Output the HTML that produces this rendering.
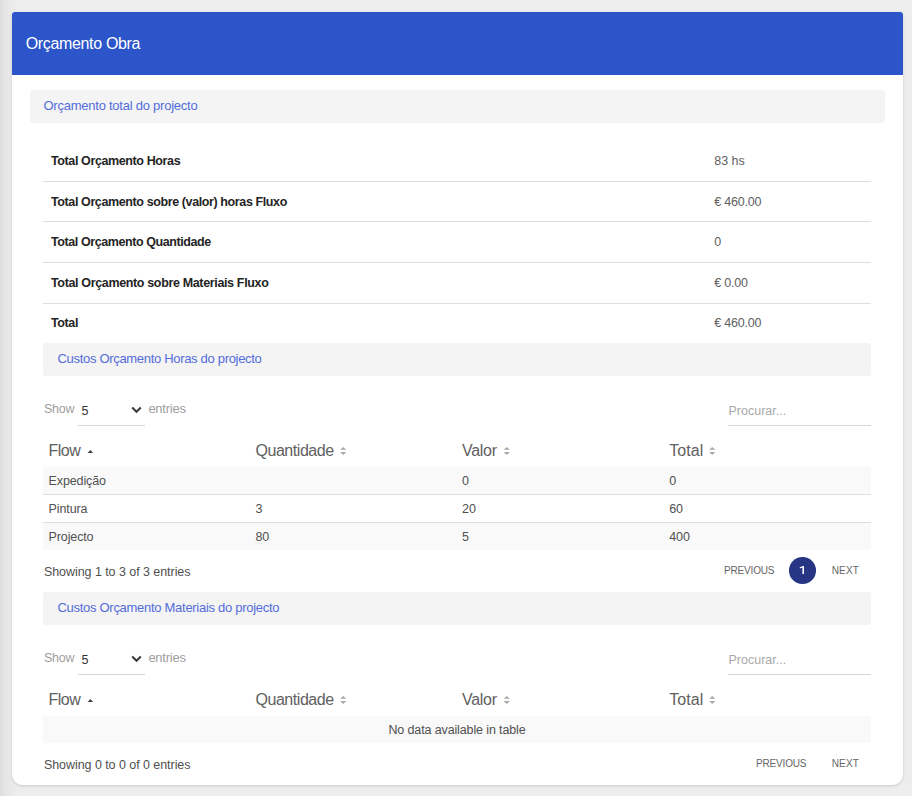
<!DOCTYPE html>
<html><head><meta charset="utf-8"><title>Orçamento Obra</title>
<style>
html,body{margin:0;padding:0;}
body{width:912px;height:796px;overflow:hidden;position:relative;background:#ededed;font-family:"Liberation Sans",sans-serif;}
.leftshade{position:absolute;left:0;top:0;width:18px;height:796px;background:linear-gradient(to right,#dcdcdc 0px,#e4e4e4 4px,#e9e9e9 10px,#ededed 18px);}
.card{position:absolute;left:12px;top:12px;width:891px;height:773px;background:#fff;border-radius:3px 3px 11px 11px;box-shadow:0 1px 3px rgba(0,0,0,.14);}
.hdr{position:absolute;left:12px;top:12px;width:891px;height:63px;background:#2c55c9;border-radius:3px 3px 0 0;}
.t{position:absolute;white-space:nowrap;line-height:1;}
.r{position:absolute;}
</style></head><body>
<div class="leftshade"></div>
<div class="card"></div>
<div class="hdr"></div>
<div class="t" style="left:25.7px;top:36px;font-size:16px;color:#ffffff;letter-spacing:-0.338px;">Orçamento Obra</div>
<div class="r" style="left:30px;top:90px;width:855px;height:33px;background:#f4f4f4;border-radius:3px;"></div>
<div class="t" style="left:43.5px;top:99px;font-size:13px;color:#536cdb;letter-spacing:-0.242px;">Orçamento total do projecto</div>
<div class="t" style="left:51px;top:155px;font-size:12.5px;color:#242424;font-weight:700;letter-spacing:-0.385px;">Total Orçamento Horas</div>
<div class="t" style="left:714.3px;top:155px;font-size:12.5px;color:#606060;letter-spacing:-0.025px;">83 hs</div>
<div class="t" style="left:51px;top:196px;font-size:12.5px;color:#242424;font-weight:700;letter-spacing:-0.39px;">Total Orçamento sobre (valor) horas Fluxo</div>
<div class="t" style="left:714.3px;top:196px;font-size:12.5px;color:#606060;letter-spacing:-0.229px;">€ 460.00</div>
<div class="t" style="left:51px;top:236px;font-size:12.5px;color:#242424;font-weight:700;letter-spacing:-0.416px;">Total Orçamento Quantidade</div>
<div class="t" style="left:714.3px;top:236px;font-size:12.5px;color:#606060;">0</div>
<div class="t" style="left:51px;top:277px;font-size:12.5px;color:#242424;font-weight:700;letter-spacing:-0.35px;">Total Orçamento sobre Materiais Fluxo</div>
<div class="t" style="left:714.3px;top:277px;font-size:12.5px;color:#606060;letter-spacing:-0.229px;">€ 0.00</div>
<div class="t" style="left:51px;top:317px;font-size:12.5px;color:#242424;font-weight:700;letter-spacing:-0.39px;">Total</div>
<div class="t" style="left:714.3px;top:317px;font-size:12.5px;color:#606060;letter-spacing:-0.229px;">€ 460.00</div>
<div class="r" style="left:43px;top:181px;width:828px;height:1px;background:#dedede;"></div>
<div class="r" style="left:43px;top:221px;width:828px;height:1px;background:#dedede;"></div>
<div class="r" style="left:43px;top:262px;width:828px;height:1px;background:#dedede;"></div>
<div class="r" style="left:43px;top:303px;width:828px;height:1px;background:#dedede;"></div>
<div class="r" style="left:43px;top:343px;width:828px;height:33px;background:#f4f4f4;border-radius:3px;"></div>
<div class="t" style="left:57.5px;top:352px;font-size:13px;color:#536cdb;letter-spacing:-0.312px;">Custos Orçamento Horas do projecto</div>
<div class="t" style="left:44px;top:403px;font-size:12.5px;color:#9e9e9e;letter-spacing:-0.267px;">Show</div>
<div class="t" style="left:81.5px;top:405px;font-size:12.5px;color:#333;">5</div>
<div class="r" style="left:78px;top:425px;width:67px;height:1px;background:#d6d6d6;"></div>
<div class="t" style="left:148.4px;top:402px;font-size:13px;color:#9e9e9e;letter-spacing:-0.25px;">entries</div>
<div class="t" style="left:728.4px;top:405px;font-size:12.5px;color:#a8a8a8;letter-spacing:0.02px;">Procurar...</div>
<div class="r" style="left:728px;top:425px;width:143px;height:1px;background:#d6d6d6;"></div>
<div class="t" style="left:48.6px;top:443px;font-size:16px;color:#606060;letter-spacing:-0.533px;">Flow</div>
<div class="t" style="left:255.5px;top:443px;font-size:16px;color:#606060;letter-spacing:-0.456px;">Quantidade</div>
<div class="t" style="left:462.1px;top:443px;font-size:16px;color:#606060;letter-spacing:-0.325px;">Valor</div>
<div class="t" style="left:669.3px;top:443px;font-size:16px;color:#606060;letter-spacing:0.05px;">Total</div>
<div class="r" style="left:43px;top:467px;width:828px;height:27px;background:#f9f9f9;"></div>
<div class="r" style="left:43px;top:494px;width:828px;height:1px;background:#dedede;"></div>
<div class="t" style="left:48.6px;top:475px;font-size:12.5px;color:#505050;letter-spacing:-0.125px;">Expedição</div>
<div class="t" style="left:462.1px;top:475px;font-size:12.5px;color:#505050;letter-spacing:-0.125px;">0</div>
<div class="t" style="left:669.3px;top:475px;font-size:12.5px;color:#505050;letter-spacing:-0.125px;">0</div>
<div class="r" style="left:43px;top:522px;width:828px;height:1px;background:#dedede;"></div>
<div class="t" style="left:48.6px;top:503px;font-size:12.5px;color:#505050;letter-spacing:-0.125px;">Pintura</div>
<div class="t" style="left:255.5px;top:503px;font-size:12.5px;color:#505050;letter-spacing:-0.125px;">3</div>
<div class="t" style="left:462.1px;top:503px;font-size:12.5px;color:#505050;letter-spacing:-0.125px;">20</div>
<div class="t" style="left:669.3px;top:503px;font-size:12.5px;color:#505050;letter-spacing:-0.125px;">60</div>
<div class="r" style="left:43px;top:523px;width:828px;height:27px;background:#f9f9f9;"></div>
<div class="t" style="left:48.6px;top:531px;font-size:12.5px;color:#505050;letter-spacing:-0.125px;">Projecto</div>
<div class="t" style="left:255.5px;top:531px;font-size:12.5px;color:#505050;letter-spacing:-0.125px;">80</div>
<div class="t" style="left:462.1px;top:531px;font-size:12.5px;color:#505050;letter-spacing:-0.125px;">5</div>
<div class="t" style="left:669.3px;top:531px;font-size:12.5px;color:#505050;letter-spacing:-0.125px;">400</div>
<div class="t" style="left:43.9px;top:566px;font-size:12.5px;color:#505050;letter-spacing:-0.054px;">Showing 1 to 3 of 3 entries</div>
<div class="t" style="left:724.1px;top:566px;font-size:10px;color:#666666;letter-spacing:-0.186px;">PREVIOUS</div>
<div class="r" style="left:789.2px;top:557.2px;width:26.6px;height:26.5px;background:#263685;border-radius:50%;"></div>
<div class="t" style="left:831.8px;top:566px;font-size:10px;color:#666666;letter-spacing:0.1px;">NEXT</div>
<div class="r" style="left:43px;top:592px;width:828px;height:33px;background:#f4f4f4;border-radius:3px;"></div>
<div class="t" style="left:57.5px;top:601px;font-size:13px;color:#536cdb;letter-spacing:-0.289px;">Custos Orçamento Materiais do projecto</div>
<div class="t" style="left:44px;top:652px;font-size:12.5px;color:#9e9e9e;letter-spacing:-0.267px;">Show</div>
<div class="t" style="left:81.5px;top:654px;font-size:12.5px;color:#333;">5</div>
<div class="r" style="left:78px;top:674px;width:67px;height:1px;background:#d6d6d6;"></div>
<div class="t" style="left:148.4px;top:651px;font-size:13px;color:#9e9e9e;letter-spacing:-0.25px;">entries</div>
<div class="t" style="left:728.4px;top:654px;font-size:12.5px;color:#a8a8a8;letter-spacing:0.02px;">Procurar...</div>
<div class="r" style="left:728px;top:674px;width:143px;height:1px;background:#d6d6d6;"></div>
<div class="t" style="left:48.6px;top:692px;font-size:16px;color:#606060;letter-spacing:-0.533px;">Flow</div>
<div class="t" style="left:255.5px;top:692px;font-size:16px;color:#606060;letter-spacing:-0.456px;">Quantidade</div>
<div class="t" style="left:462.1px;top:692px;font-size:16px;color:#606060;letter-spacing:-0.325px;">Valor</div>
<div class="t" style="left:669.3px;top:692px;font-size:16px;color:#606060;letter-spacing:0.05px;">Total</div>
<div class="r" style="left:43px;top:716px;width:828px;height:27px;background:#f9f9f9;"></div>
<div class="t" style="left:43px;top:724px;font-size:12.5px;color:#505050;letter-spacing:-0.125px;width:828px;text-align:center;">No data available in table</div>
<div class="t" style="left:43.9px;top:759px;font-size:12.5px;color:#505050;letter-spacing:-0.054px;">Showing 0 to 0 of 0 entries</div>
<div class="t" style="left:756.1px;top:759px;font-size:10px;color:#666666;letter-spacing:-0.186px;">PREVIOUS</div>
<div class="t" style="left:831.8px;top:759px;font-size:10px;color:#666666;letter-spacing:0.1px;">NEXT</div>
<svg class="r" style="left:0;top:0" width="912" height="796"><path d="M132.2 407.5 L136.5 411.8 L140.8 407.5" fill="none" stroke="#3a3a3a" stroke-width="2"/><path d="M87.6 452.9 L93.2 452.9 L90.4 449.9Z" fill="#444"/><path d="M340.1 449.8 L346.3 449.8 L343.2 446.9Z M340.1 452.1 L346.3 452.1 L343.2 455.1Z" fill="#a8a8a8"/><path d="M503.7 449.8 L509.9 449.8 L506.8 446.9Z M503.7 452.1 L509.9 452.1 L506.8 455.1Z" fill="#a8a8a8"/><path d="M709.1 449.8 L715.3 449.8 L712.2 446.9Z M709.1 452.1 L715.3 452.1 L712.2 455.1Z" fill="#a8a8a8"/><path d="M802.4 574 L804.0 574 L804.0 566 L803.0 566 L799.8 567.2 L799.8 568.5 L802.4 567.6 Z" fill="#fff"/><path d="M132.2 656.5 L136.5 660.8 L140.8 656.5" fill="none" stroke="#3a3a3a" stroke-width="2"/><path d="M87.6 701.9 L93.2 701.9 L90.4 698.9Z" fill="#444"/><path d="M340.1 698.8 L346.3 698.8 L343.2 695.9Z M340.1 701.1 L346.3 701.1 L343.2 704.1Z" fill="#a8a8a8"/><path d="M503.7 698.8 L509.9 698.8 L506.8 695.9Z M503.7 701.1 L509.9 701.1 L506.8 704.1Z" fill="#a8a8a8"/><path d="M709.1 698.8 L715.3 698.8 L712.2 695.9Z M709.1 701.1 L715.3 701.1 L712.2 704.1Z" fill="#a8a8a8"/></svg>
</body></html>
